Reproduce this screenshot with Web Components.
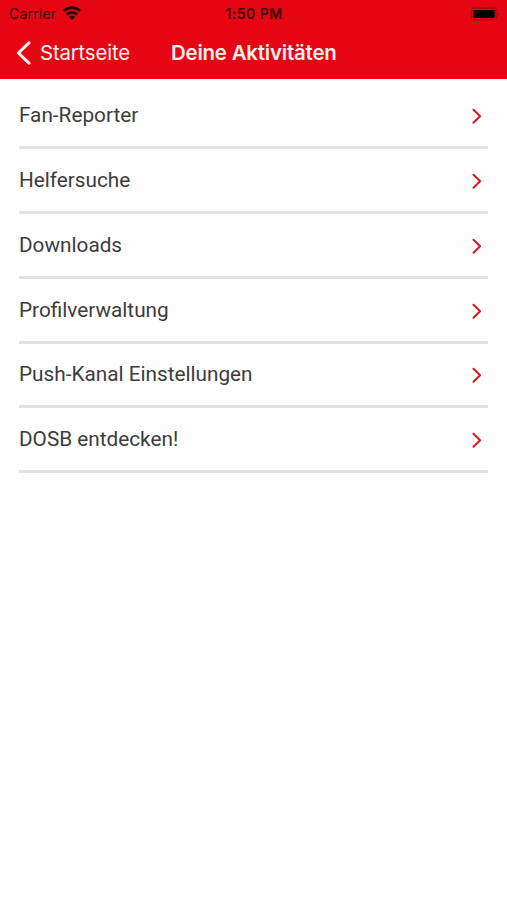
<!DOCTYPE html>
<html lang="de">
<head>
<meta charset="utf-8">
<title>Deine Aktivitäten</title>
<style>
body { margin: 0; background: #fefefe; font-family: Roboto, sans-serif; }
</style>
</head>
<body>
<app-screen></app-screen>
<script>
const define = (name, html) => customElements.define(name, class extends HTMLElement {
  constructor() {
    super();
    this.attachShadow({ mode: 'open' }).innerHTML = html;
  }
});

define('status-bar', `
<style>
:host { display: grid; grid-template-columns: 1fr auto 1fr; align-items: center; height: 27px; padding: 0 7px 0 9px; color: #3b0306; font: 14.2px/27px Inter, sans-serif; }
.left { display: flex; align-items: center; gap: 7px; letter-spacing: .1px; }
.left svg { margin-top: -2px; }
.time { font-weight: 600; font-size: 14px; letter-spacing: .45px; margin-left: -1px; }
.battery { justify-self: end; }
svg { display: block; }
</style>
<div class="left"><span>Carrier</span>
<svg width="18" height="14" viewBox="0 0 18 14" fill="none" stroke="#1c0002" stroke-width="2.7"><path d="M1 5a11.4 11.4 0 0 1 16 0M3.9 8.5a7.2 7.2 0 0 1 10.2 0"/><path d="M6 11a4.3 4.3 0 0 1 6 0L9 14z" fill="#1c0002" stroke="none"/></svg></div>
<span class="time">1:50 PM</span>
<svg class="battery" width="30" height="14" viewBox="0 0 30 14"><rect x="1.2" y="1.2" width="25" height="11.6" rx="3" fill="none" stroke="#a9030b" stroke-width="1.2"/><rect x="3" y="3" width="21.7" height="8" rx="1.4" fill="#000"/><path d="M27.7 5v4q1.7-.8 1.7-2t-1.7-2z" fill="#a9030b"/></svg>`);

define('nav-bar', `
<style>
:host { display: flex; align-items: center; height: 52px; padding: 0 16px; box-sizing: border-box; color: #fff0ef; font: 20.4px/52px Inter, sans-serif; }
.back { display: flex; align-items: center; gap: 9px; width: 155px; letter-spacing: -.18px; }
.title { font-weight: 600; letter-spacing: -.18px; white-space: nowrap; }
svg { display: block; }
</style>
<div class="back"><svg width="15" height="24" viewBox="0 0 15 24" fill="none" stroke="#fff0ef" stroke-width="3" stroke-linecap="round" stroke-linejoin="round"><path d="M13 1.8 2.4 12 13 22.2"/></svg><slot name="back"></slot></div>
<div class="title"><slot></slot></div>`);

define('list-row', `
<style>
:host { display: flex; align-items: center; justify-content: space-between; height: 64.75px; box-sizing: border-box; border-bottom: 3px solid #e2e2e2; padding-right: 6px; color: #3c3c3c; font-size: 20.75px; line-height: 26px; }
svg { display: block; margin-top: 2px; }
</style>
<span><slot></slot></span>
<svg width="10" height="16" viewBox="0 0 10 16" fill="none" stroke="#d71724" stroke-width="2" stroke-linecap="round" stroke-linejoin="round"><path d="M1.5 1.7 8.1 8.2 1.5 14.7"/></svg>`);

define('app-screen', `
<style>
:host { display: block; height: 900px; overflow: hidden; background: #fefefe; }
header { height: 79px; background: #e60613; }
main { padding: 5.5px 19px 0; }
</style>
<header><status-bar></status-bar><nav-bar><span slot="back">Startseite</span>Deine Aktivitäten</nav-bar></header>
<main><list-row>Fan-Reporter</list-row><list-row>Helfersuche</list-row><list-row>Downloads</list-row><list-row>Profilverwaltung</list-row><list-row>Push-Kanal Einstellungen</list-row><list-row>DOSB entdecken!</list-row></main>`);
</script>
</body>
</html>
